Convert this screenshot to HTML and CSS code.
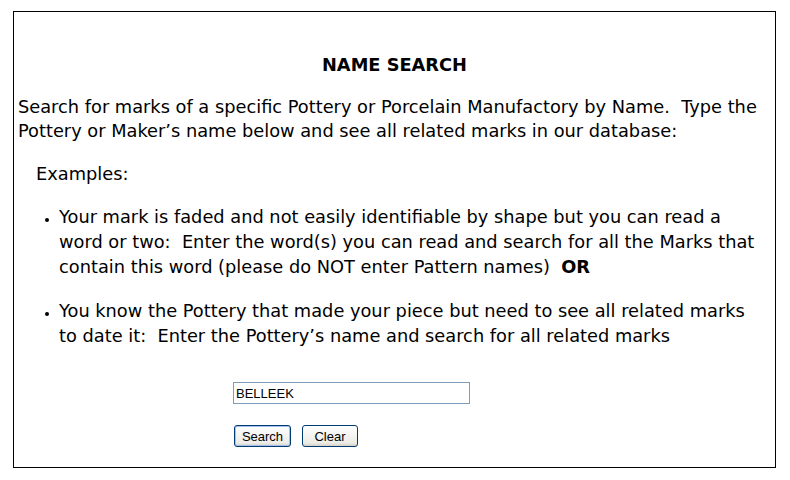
FILE: index.html
```html
<!DOCTYPE html>
<html>
<head>
<meta charset="utf-8">
<link rel="stylesheet" href="styles.css">
</head>
<body>
<div class="box">
  <h1 class="title">NAME SEARCH</h1>
  <p class="intro">Search for marks of a specific Pottery or Porcelain Manufactory by Name.&nbsp; Type the Pottery or Maker’s name below and see all related marks in our database:</p>
  <p class="examples">Examples:</p>
  <ul class="list">
    <li>Your mark is faded and not easily identifiable by shape but you can read a word or two:&nbsp; Enter the word(s) you can read and search for all the Marks that contain this word (please do NOT enter Pattern names)&nbsp; <b>OR</b></li>
    <li>You know the Pottery that made your piece but need to see all related marks to date it:&nbsp; Enter the Pottery’s name and search for all related marks</li>
  </ul>
  <form class="form">
    <input class="field" type="text" value="BELLEEK">
    <div class="buttons">
      <button type="button" class="btn btn-primary">Search</button>
      <button type="button" class="btn">Clear</button>
    </div>
  </form>
</div>
</body>
</html>
```
FILE: styles.css
```css
html, body {
  margin: 0;
  padding: 0;
  background: #fff;
}
body {
  padding: 11px 0 0 13px;
  font-family: "DejaVu Sans", Verdana, sans-serif;
  font-size: 17.8px;
  color: #000;
}
.box {
  box-sizing: border-box;
  width: 763px;
  height: 457px;
  border: 1px solid #000;
  padding: 0 4px;
}
.title {
  margin: 41px 0 0;
  text-align: center;
  font-size: 17.8px;
  font-weight: bold;
  line-height: 24px;
}
.intro {
  margin: 18px 0 0;
  line-height: 24px;
}
.examples {
  margin: 19px 0 0 18px;
  line-height: 24px;
}
.list {
  list-style: none;
  margin: 18px 0 0;
  padding: 0 11px 0 41px;
  line-height: 25px;
}
.list li {
  position: relative;
  margin-bottom: 19px;
}
.list li::before {
  content: "";
  position: absolute;
  left: -14px;
  top: 14px;
  width: 4px;
  height: 4px;
  border-radius: 50%;
  background: #000;
}
.form {
  margin: 34px 0 0 215px;
}
.field {
  box-sizing: border-box;
  width: 237px;
  height: 22px;
  border: 1px solid #7f9db9;
  padding: 0 2px;
  font-family: "Liberation Sans", Arial, sans-serif;
  font-size: 13px;
  display: block;
}
.buttons {
  margin-top: 21px;
  display: flex;
  gap: 11px;
  padding-left: 1px;
}
.btn {
  box-sizing: border-box;
  height: 22px;
  padding: 0 6px;
  border: 1px solid #003c74;
  border-radius: 3px;
  background: linear-gradient(#ffffff, #ecebe6 85%, #d6d0c5);
  font-family: "Liberation Sans", Arial, sans-serif;
  font-size: 13px;
  color: #000;
}
.btn-primary {
  box-shadow: inset 0 0 0 1px #a4bfe9;
  width: 57px;
}
.btn:not(.btn-primary) {
  width: 56px;
}
```
